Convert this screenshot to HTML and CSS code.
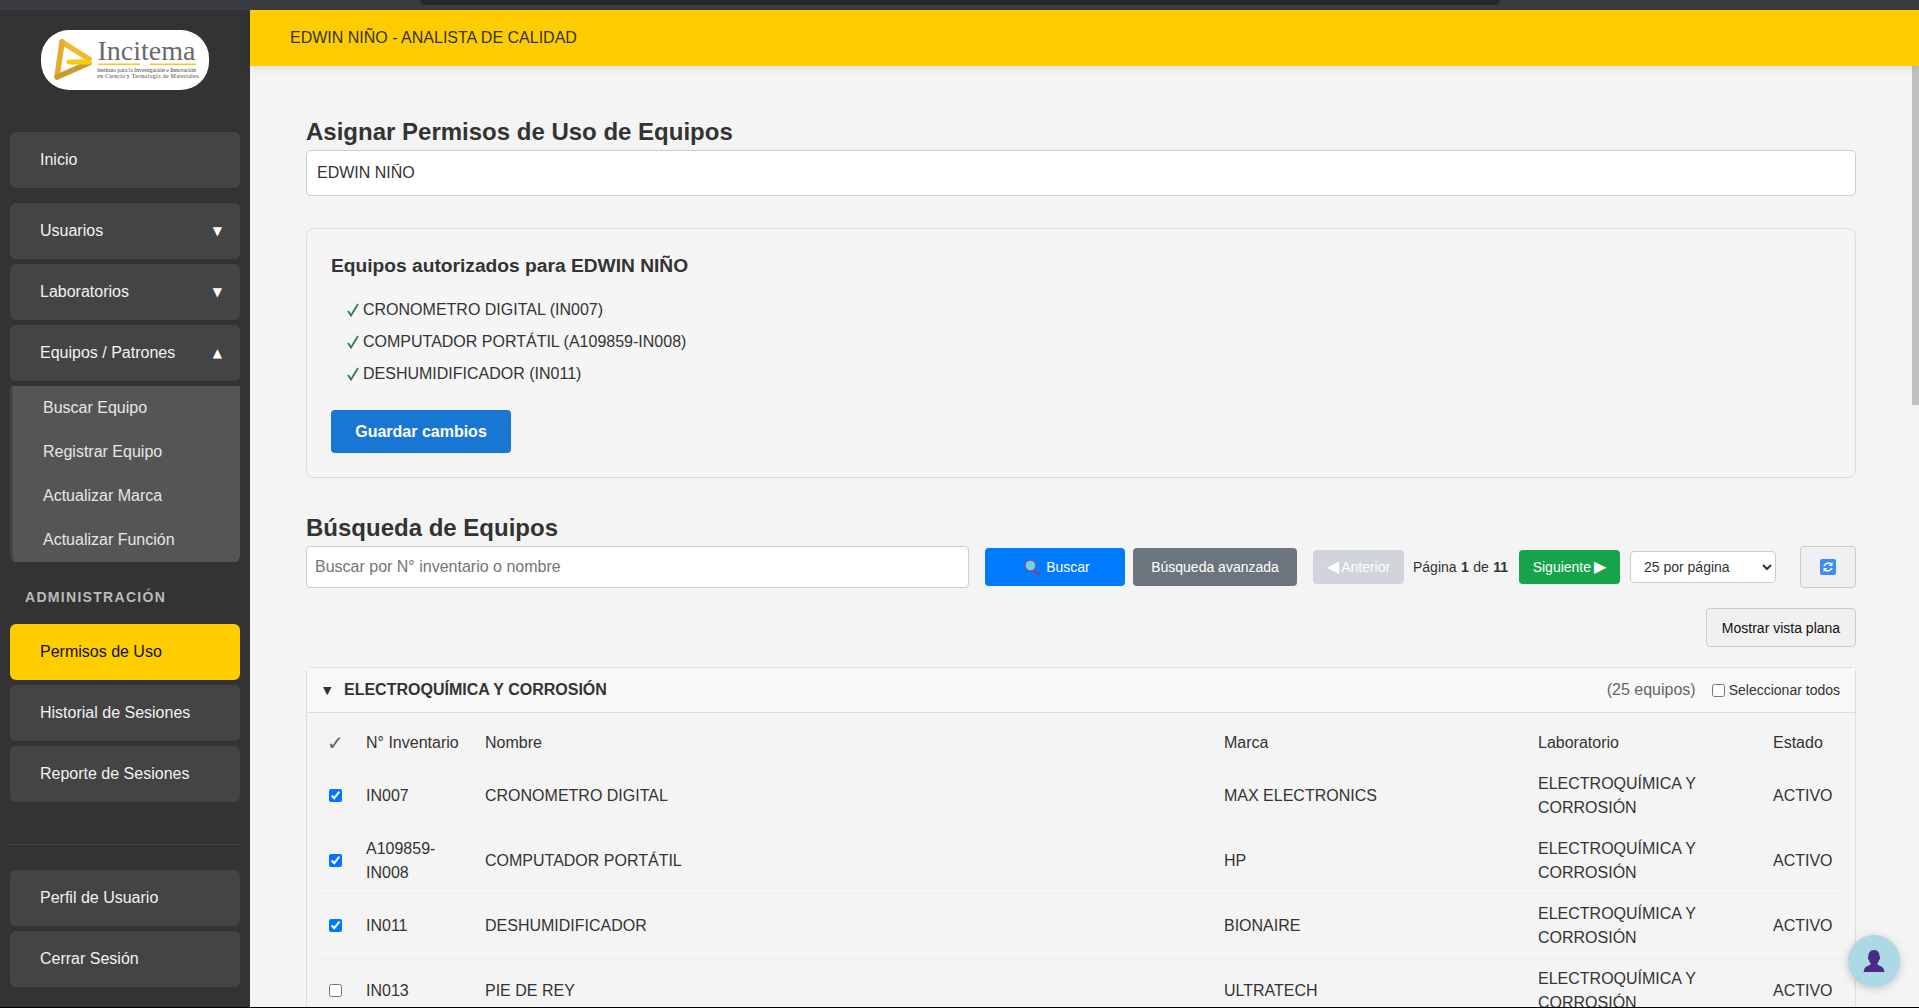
FILE: index.html
```html
<!DOCTYPE html>
<html lang="es">
<head>
<meta charset="utf-8">
<title>Asignar Permisos de Uso de Equipos</title>
<link rel="stylesheet" href="styles.css">
</head>
<body>
<div class="top-strip"><div class="top-notch"></div></div>
<div class="app">
  <aside class="sidebar">
    <div class="logo">
      <svg width="168" height="60" viewBox="0 0 168 60">
        <g fill="none" stroke-width="5.500" stroke-linecap="round">
          <path d="M21 12 L48 29" stroke="#efbb2b"/>
          <path d="M21 12 L16 47" stroke="#e3ac32"/>
          <path d="M16 47 L48 33" stroke="#c99a35"/>
          <path d="M28 32 H48" stroke="#fcc90c" stroke-width="5"/>
        </g>
        <text x="56.500" y="30" class="logo-name">Incitema</text>
        <rect x="57" y="33.500" width="42" height="1.500" fill="#fbc80f"/>
        <rect x="109" y="33.500" width="46" height="1.500" fill="#fbc80f"/>
        <text x="56" y="42" class="logo-sub" textLength="99">Instituto para la Investigación e Innovación</text>
        <text x="56" y="48" class="logo-sub" textLength="103">en Ciencia y Tecnología de Materiales.</text>
      </svg>
    </div>
    <nav class="nav">
      <a class="nav-item nav-first">Inicio</a>
      <a class="nav-item">Usuarios<span class="caret">▼</span></a>
      <a class="nav-item">Laboratorios<span class="caret">▼</span></a>
      <a class="nav-item">Equipos / Patrones<span class="caret">▲</span></a>
      <div class="submenu">
        <a class="sub-item">Buscar Equipo</a>
        <a class="sub-item">Registrar Equipo</a>
        <a class="sub-item">Actualizar Marca</a>
        <a class="sub-item">Actualizar Función</a>
      </div>
      <div class="nav-label">ADMINISTRACIÓN</div>
      <a class="nav-item active">Permisos de Uso</a>
      <a class="nav-item">Historial de Sesiones</a>
      <a class="nav-item">Reporte de Sesiones</a>
    </nav>
    <div class="nav-bottom">
      <a class="nav-item">Perfil de Usuario</a>
      <a class="nav-item">Cerrar Sesión</a>
    </div>
  </aside>
  <div class="main">
    <header class="topbar">EDWIN NIÑO - ANALISTA DE CALIDAD</header>
    <div class="scroller">
      <div class="content">
        <h2 class="title">Asignar Permisos de Uso de Equipos</h2>
        <input class="user-input" type="text" value="EDWIN NIÑO">
        <section class="auth-card">
          <h3 class="auth-title">Equipos autorizados para EDWIN NIÑO</h3>
          <ul class="auth-list">
            <li><svg class="tick" width="12" height="14" viewBox="0 0 12 14"><path d="M1 8 L4 12.500 L11 1" fill="none" stroke="#2a7f45" stroke-width="1.800"/></svg>CRONOMETRO DIGITAL (IN007)</li>
            <li><svg class="tick" width="12" height="14" viewBox="0 0 12 14"><path d="M1 8 L4 12.500 L11 1" fill="none" stroke="#2a7f45" stroke-width="1.800"/></svg>COMPUTADOR PORTÁTIL (A109859-IN008)</li>
            <li><svg class="tick" width="12" height="14" viewBox="0 0 12 14"><path d="M1 8 L4 12.500 L11 1" fill="none" stroke="#2a7f45" stroke-width="1.800"/></svg>DESHUMIDIFICADOR (IN011)</li>
          </ul>
          <button class="btn-save">Guardar cambios</button>
        </section>
        <h2 class="title title-search">Búsqueda de Equipos</h2>
        <div class="toolbar">
          <input class="search-input" type="text" placeholder="Buscar por N° inventario o nombre">
          <button class="btn btn-search">
            <svg width="16" height="17" viewBox="0 0 16 17"><path d="M10 11 L14.500 16" stroke="#8c3f7f" stroke-width="2.400" stroke-linecap="round"/><circle cx="6.500" cy="6.500" r="5.500" fill="#6fd3e3" stroke="#6d5a9e" stroke-width="1.400"/></svg>
            Buscar</button>
          <button class="btn btn-adv">Búsqueda avanzada</button>
          <button class="btn btn-prev"><span class="arrow arrow-l">◀</span>Anterior</button>
          <span class="page-info">Página <b>1</b> de <b>11</b></span>
          <button class="btn btn-next">Siguiente<span class="arrow arrow-r">▶</span></button>
          <select class="per-page"><option>25 por página</option></select>
          <button class="btn-refresh" aria-label="Actualizar">
            <svg width="16" height="16" viewBox="0 0 16 16"><rect width="16" height="16" rx="2" fill="#3f8cf0"/><path d="M4 7 A4.500 4.500 0 0 1 11.500 5.500 M12 9 A4.500 4.500 0 0 1 4.500 10.500" fill="none" stroke="#fff" stroke-width="1.600"/><path d="M12.500 3 V7 H8.500 Z M3.500 13 V9 H7.500 Z" fill="#fff"/></svg>
          </button>
        </div>
        <div class="view-row"><button class="btn-view">Mostrar vista plana</button></div>
        <section class="group">
          <div class="group-head">
            <span class="group-arrow">▼</span>
            <span class="group-name">ELECTROQUÍMICA Y CORROSIÓN</span>
            <span class="group-count">(25 equipos)</span>
            <label class="select-all"><input type="checkbox">Seleccionar todos</label>
          </div>
          <div class="group-body">
            <table class="equip">
              <colgroup><col class="c1"><col class="c2"><col class="c3"><col class="c4"><col class="c5"><col class="c6"></colgroup>
              <thead>
                <tr><th class="th-check">✓</th><th>N° Inventario</th><th>Nombre</th><th>Marca</th><th>Laboratorio</th><th>Estado</th></tr>
              </thead>
              <tbody>
                <tr><td><input type="checkbox" checked></td><td>IN007</td><td>CRONOMETRO DIGITAL</td><td>MAX ELECTRONICS</td><td>ELECTROQUÍMICA Y CORROSIÓN</td><td>ACTIVO</td></tr>
                <tr><td><input type="checkbox" checked></td><td>A109859-IN008</td><td>COMPUTADOR PORTÁTIL</td><td>HP</td><td>ELECTROQUÍMICA Y CORROSIÓN</td><td>ACTIVO</td></tr>
                <tr><td><input type="checkbox" checked></td><td>IN011</td><td>DESHUMIDIFICADOR</td><td>BIONAIRE</td><td>ELECTROQUÍMICA Y CORROSIÓN</td><td>ACTIVO</td></tr>
                <tr><td><input type="checkbox"></td><td>IN013</td><td>PIE DE REY</td><td>ULTRATECH</td><td>ELECTROQUÍMICA Y CORROSIÓN</td><td>ACTIVO</td></tr>
              </tbody>
            </table>
          </div>
        </section>
      </div>
    </div>
    <div class="scroll-thumb"></div>
  </div>
</div>
<button class="chat-btn" aria-label="Asistente">
  <svg width="22" height="24" viewBox="0 0 22 24"><path d="M11 1 C15 1 16.500 4 16.500 7 L17 8 V10 L16 11 C15.500 13 14.500 14.500 14 15 C15 16.500 19 17 20.500 19.500 L21.500 23 H0.500 L1.500 19.500 C3 17 7 16.500 8 15 C7.500 14.500 6.500 13 6 11 L5 10 V8 L5.500 7 C5.500 4 7 1 11 1 Z" fill="#4b2a86"/></svg>
</button>
</body>
</html>
```

FILE: styles.css
```css
* { box-sizing: border-box; }
html, body { margin: 0; height: 1008px; overflow: hidden; }
body {
  background: #000;
  font-family: "Liberation Sans", Arial, sans-serif;
  font-size: 16px;
  color: #333;
}
.top-strip { height: 10px; background: #3c3b41; padding: 0 419px 0 420px; }
.top-notch { height: 5px; background: #26262b; border-radius: 0 0 8px 8px; }
.app { display: flex; height: 997px; }

/* Sidebar */
.sidebar {
  width: 250px;
  flex: none;
  background: #333;
  padding: 20px 10px;
  display: flex;
  flex-direction: column;
}
.logo {
  width: 168px;
  height: 60px;
  margin: 0 auto 42px;
  background: #fff;
  border-radius: 28px;
}
.logo svg { display: block; }
.logo-name { font-family: "Liberation Serif", serif; font-size: 28px; fill: #6a6a6a; }
.logo-sub { font-family: "Liberation Serif", serif; font-size: 5.900px; fill: #444; }
.nav-item {
  display: flex;
  justify-content: space-between;
  align-items: center;
  height: 56px;
  margin-bottom: 5px;
  padding: 0 18px 0 30px;
  background: #444;
  border-radius: 6px;
  color: #f2f2f2;
}
.nav-first { margin-bottom: 15px; }
.caret { font-family: "DejaVu Sans", sans-serif; font-size: 12px; color: #fff; }
.submenu {
  background: #555;
  border-left: 3px solid #444;
  border-radius: 0 0 6px 6px;
}
.sub-item {
  display: flex;
  align-items: center;
  height: 44px;
  padding-left: 30px;
  color: #e6e6e6;
}
.nav-label {
  margin: 26px 0 18px 15px;
  height: 18px;
  line-height: 18px;
  font-size: 14px;
  font-weight: 700;
  letter-spacing: 1.300px;
  color: #bbb;
}
.nav-item.active { background: #fc0; color: #111; }
.nav-bottom { margin-top: auto; border-top: 1px solid #444; padding-top: 25px; }
.nav-bottom .nav-item:last-child { margin-bottom: 0; }

/* Main */
.main { flex: 1; min-width: 0; display: flex; flex-direction: column; background: #f4f4f4; position: relative; }
.topbar {
  flex: none;
  height: 56px;
  line-height: 55px;
  padding-left: 40px;
  background: #fc0;
  color: #333;
  box-shadow: 0 2px 8px rgba(0, 0, 0, .1);
  position: relative;
  z-index: 1;
}
.scroller { flex: 1; min-height: 0; overflow: hidden; }
.scroll-thumb {
  position: absolute;
  top: 56px;
  right: 0;
  width: 7px;
  height: 339px;
  background: #c1c1c1;
}
.content { padding: 52px 63px 0 56px; }
.title { margin: 0 0 4px; font-size: 24px; line-height: 28px; font-weight: 700; color: #333; }
.title-search { margin-top: 36px; }
.user-input {
  display: block;
  width: 100%;
  height: 46px;
  padding: 0 10px;
  border: 1px solid #ccc;
  border-radius: 5px;
  background: #fff;
  font: inherit;
  color: #333;
}
.auth-card {
  margin-top: 32px;
  height: 250px;
  padding: 24px;
  border: 1px solid #ddd;
  border-radius: 8px;
  background: #f5f5f5;
}
.auth-title { margin: 0 0 15px; font-size: 19.200px; line-height: 26px; font-weight: 700; color: #333; }
.auth-list { margin: 0 0 20px; padding: 0 0 0 15px; list-style: none; }
.auth-list li { height: 32px; line-height: 32px; }
.tick { margin: 0 4px 0 1px; vertical-align: -2px; }
.btn-save {
  display: block;
  width: 180px;
  height: 43px;
  border: 0;
  border-radius: 4px;
  background: #1976d2;
  color: #fff;
  font: 700 16px "Liberation Sans", Arial, sans-serif;
}

/* Toolbar */
.toolbar { display: flex; align-items: center; height: 42px; }
.search-input {
  width: 663px;
  height: 42px;
  padding: 0 8px;
  border: 1px solid #ccc;
  border-radius: 4px;
  background: #fff;
  font: inherit;
  margin-right: 16px;
}
.search-input::placeholder { color: #757575; }
.btn {
  border: 0;
  border-radius: 4px;
  font: 14px "Liberation Sans", Arial, sans-serif;
  color: #fff;
  padding: 0;
}
.btn-search {
  width: 140px;
  height: 38px;
  background: #007bff;
  margin-right: 8px;
  padding-left: 4px;
  display: flex;
  align-items: center;
  justify-content: center;
  gap: 6px;
}
.btn-adv { width: 164px; height: 38px; background: #6c757d; margin-right: 16px; }
.btn-prev { width: 91px; height: 34px; background: #d1d5db; margin-right: 9px; }
.arrow { font-family: "DejaVu Sans", sans-serif; font-size: 16px; line-height: 1; }
.arrow-l { margin-right: 2px; }
.arrow-r { margin-left: 3px; }
.page-info { width: 96px; font-size: 14px; margin-right: 10px; white-space: nowrap; word-spacing: .5px; }
.btn-next { width: 101px; height: 34px; background: #16a34a; margin-right: 10px; }
.per-page {
  width: 146px;
  height: 32px;
  padding: 0 9px;
  border: 1px solid #ccc;
  border-radius: 4px;
  background: #fff;
  font: 14px "Liberation Sans", Arial, sans-serif;
  color: #333;
  margin-right: 24px;
}
.btn-refresh {
  width: 56px;
  height: 42px;
  padding: 0;
  border: 1px solid #ccc;
  border-radius: 4px;
  background: #eef0f1;
  display: flex;
  align-items: center;
  justify-content: center;
}
.view-row { display: flex; justify-content: flex-end; margin-top: 20px; }
.btn-view {
  width: 150px;
  height: 39px;
  padding: 0;
  border: 1px solid #ccc;
  border-radius: 4px;
  background: #f0f0f0;
  color: #111;
  font: 14px "Liberation Sans", Arial, sans-serif;
}

/* Group */
.group { margin-top: 20px; border: 1px solid #ddd; border-radius: 5px; }
.group-head {
  display: flex;
  align-items: center;
  height: 45px;
  padding: 0 15px 0 16px;
  background: #f8f8f8;
  border-bottom: 1px solid #ddd;
}
.group-arrow { font-family: "DejaVu Sans", sans-serif; font-size: 11px; width: 21px; color: #333; }
.group-name { font-weight: 700; color: #333; flex: 1; }
.group-count { color: #666; margin-right: 16px; }
.select-all { display: flex; align-items: center; font-size: 14px; }
.select-all input { margin: 0 4px 0 0; width: 13px; height: 13px; }
.group-body { padding: 10px 10px 0; }
.equip { width: 1528px; table-layout: fixed; border-collapse: collapse; color: #333; }
.c1 { width: 41px; }
.c2 { width: 119px; }
.c3 { width: 739px; }
.c4 { width: 314px; }
.c5 { width: 235px; }
.c6 { width: 80px; }
.equip th {
  height: 40px;
  padding: 0 8px;
  text-align: left;
  font-weight: 400;
  border-bottom: 1px solid #eee;
}
.equip .th-check { padding-left: 10px; font-family: "DejaVu Sans", sans-serif; font-size: 20px; line-height: 24px; color: #666; }
.equip td {
  height: 65px;
  padding: 8px;
  line-height: 24px;
  border-bottom: 1px solid #eee;
}
.equip td input { display: block; margin: 3px 3px 3px 4px; }

/* Floating button */
.chat-btn {
  position: absolute;
  left: 1848px;
  top: 935px;
  width: 52px;
  height: 52px;
  padding: 0;
  border: 0;
  border-radius: 50%;
  background: #add8e6;
  box-shadow: 0 2px 8px rgba(0, 0, 0, .2);
  display: flex;
  align-items: center;
  justify-content: center;
}
```
